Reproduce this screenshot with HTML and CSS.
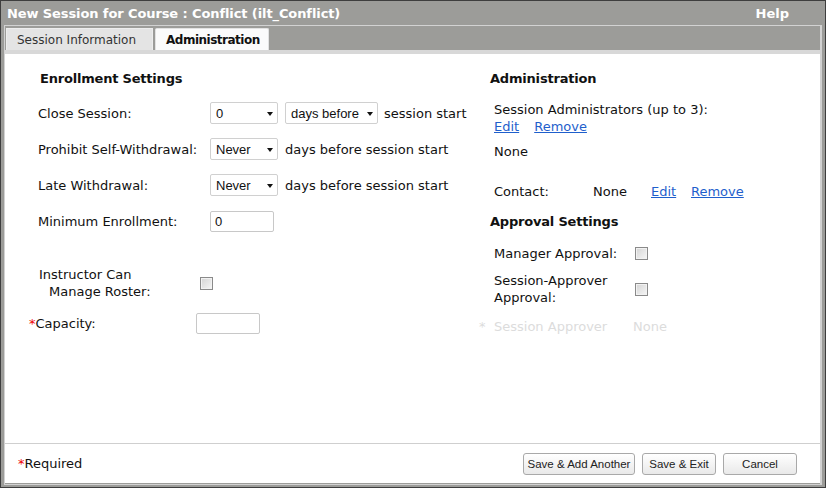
FILE: index.html
```html
<!DOCTYPE html>
<html>
<head>
<meta charset="utf-8">
<link rel="stylesheet" href="styles.css">
</head>
<body>
<div class="window">
  <div class="titlebar">
    <span class="title">New Session for Course : Conflict (ilt_Conflict)</span>
    <span class="help">Help</span>
  </div>
  <div class="panel">
    <div class="tabs">
      <div class="tab">Session Information</div>
      <div class="tab active">Administration</div>
    </div>
    <div class="band"></div>
    <div class="content">
      <div class="col-left">
        <h2 class="heading">Enrollment Settings</h2>
        <div class="rows">
          <div class="row">
            <span class="label">Close Session:</span>
            <span class="select sel-small"><select><option>0</option></select></span>
            <span class="select sel-days"><select><option>days before</option></select></span>
            <span class="after">session start</span>
          </div>
          <div class="row">
            <span class="label">Prohibit Self-Withdrawal:</span>
            <span class="select sel-small"><select><option>Never</option></select></span>
            <span class="after">days before session start</span>
          </div>
          <div class="row">
            <span class="label">Late Withdrawal:</span>
            <span class="select sel-small"><select><option>Never</option></select></span>
            <span class="after">days before session start</span>
          </div>
          <div class="row">
            <span class="label">Minimum Enrollment:</span>
            <input class="text" type="text" value="0">
          </div>
          <div class="row row-roster">
            <span class="label label-roster"><span>Instructor Can</span><span class="indent">Manage Roster:</span></span>
            <input class="check" type="checkbox">
          </div>
          <div class="row row-capacity">
            <span class="label label-cap"><span class="req">*</span>Capacity:</span>
            <input class="text" type="text" value="">
          </div>
        </div>
      </div>
      <div class="col-right">
        <h2 class="heading">Administration</h2>
        <div class="admins">
          <div>Session Administrators (up to 3):</div>
          <div class="links"><a href="#">Edit</a><a href="#">Remove</a></div>
        </div>
        <div class="none">None</div>
        <div class="contact">
          <span class="c-label">Contact:</span>
          <span class="c-value">None</span>
          <a href="#" class="c-edit">Edit</a>
          <a href="#">Remove</a>
        </div>
        <h2 class="heading heading-approval">Approval Settings</h2>
        <div class="approval approval-mgr">
          <span class="a-label">Manager Approval:</span>
          <input class="check" type="checkbox">
        </div>
        <div class="approval approval-sess">
          <span class="a-label">Session-Approver<br>Approval:</span>
          <input class="check" type="checkbox">
        </div>
        <div class="approver">
          <span class="star">*</span>
          <span class="ap-label">Session Approver</span>
          <span>None</span>
        </div>
      </div>
    </div>
    <div class="footer">
      <span class="required"><span class="req">*</span>Required</span>
      <div class="buttons">
        <button class="btn btn-wide">Save &amp; Add Another</button>
        <button class="btn">Save &amp; Exit</button>
        <button class="btn">Cancel</button>
      </div>
    </div>
  </div>
</div>
</body>
</html>
```

FILE: styles.css
```css
* { box-sizing: border-box; }
html, body { margin: 0; padding: 0; }
body {
  font-family: "DejaVu Sans", Verdana, sans-serif;
  font-size: 13px;
  color: #111;
  background: #fff;
}
.window {
  width: 826px;
  height: 488px;
  border: 1px solid #3e3e3e;
  background: #9c9c99;
  display: flex;
  flex-direction: column;
}
.titlebar {
  height: 24px;
  display: flex;
  align-items: center;
  justify-content: space-between;
  padding: 0 36px 0 6px;
  color: #fff;
  font-weight: bold;
  font-size: 13px;
}
.title { letter-spacing: -0.1px; }
.panel {
  margin: 0 3px;
  height: 460px;
  border: 1px solid #d2d2d2;
  border-right-width: 2px;
  display: flex;
  flex-direction: column;
}
.tabs {
  height: 24px;
  padding: 2px 0 0 1px;
  display: flex;
  gap: 2px;
}
.tab {
  height: 22px;
  padding: 0 0 0 10px;
  display: flex;
  align-items: center;
  white-space: nowrap;
  background: #e4e4e4;
  border: 1px solid #ededed;
  border-bottom: none;
  color: #333;
  font-size: 12px;
  width: 147px;
}
.tab.active {
  width: 114px;
  background: #fbfbfb;
  border-color: #e2e2e2;
  border-radius: 2px 2px 0 0;
  font-weight: bold;
  color: #111;
  letter-spacing: -0.5px;
}
.band { height: 4px; background: #d8d8d8; }
.content {
  height: 390px;
  background: #fff;
  padding: 17px 0 0 33px;
  display: flex;
  border-bottom: 1px solid #cfcfcf;
}
.heading {
  margin: 0;
  font-size: 13px;
  line-height: 16px;
  font-weight: bold;
  color: #111;
  letter-spacing: -0.2px;
}
.col-left { width: 452px; }
.col-left .heading { padding-left: 2px; }
.rows { margin-top: 15px; }
.row {
  display: flex;
  align-items: center;
  height: 22px;
  margin-bottom: 14px;
}
.label { width: 172px; flex: none; }
.select {
  position: relative;
  display: inline-block;
  height: 22px;
  flex: none;
}
.select select {
  appearance: none;
  -webkit-appearance: none;
  width: 100%;
  height: 22px;
  border: 1px solid #d0d0d0;
  border-radius: 2px;
  background: #fff;
  font-family: "Liberation Sans", Arial, sans-serif;
  font-size: 13px;
  color: #111;
  padding: 0 0 0 5px;
  margin: 0;
}
.select::after {
  content: "";
  position: absolute;
  right: 5px;
  top: 10px;
  border-left: 3.5px solid transparent;
  border-right: 3.5px solid transparent;
  border-top: 4px solid #111;
}
.sel-small { width: 68px; }
.sel-days { width: 93px; margin-left: 7px; }
.after { margin-left: 6px; }
.sel-small + .after { margin-left: 7px; }
.text {
  width: 64px;
  height: 21px;
  border: 1px solid #c8c8c8;
  border-radius: 2px;
  font-family: "Liberation Sans", Arial, sans-serif;
  font-size: 13px;
  padding: 0 0 0 4px;
  margin: 0;
  color: #111;
}
.check {
  appearance: none;
  -webkit-appearance: none;
  width: 13px;
  height: 13px;
  margin: 0;
  border: 1px solid #8a8a8a;
  background: linear-gradient(135deg, #d4d4d4, #f6f6f6);
  box-shadow: inset 0 0 0 1px #f2f2f2;
  flex: none;
}
.row-roster {
  margin-top: 34px;
  height: 34px;
  margin-bottom: 13px;
}
.label-roster {
  width: 162px;
  display: flex;
  flex-direction: column;
  line-height: 17px;
  padding-left: 1px;
}
.indent { padding-left: 10px; }
.row-capacity { height: 21px; }
.label-cap { width: 167px; margin-left: -9px; }
.req { color: #e00; }
.col-right { flex: 1; }
.admins {
  margin-top: 14px;
  padding-left: 4px;
  line-height: 17px;
}
.links a { margin-right: 15px; }
a { color: #1f5fcc; text-decoration: underline; }
.none { margin-top: 8px; padding-left: 4px; line-height: 17px; }
.contact {
  margin-top: 23px;
  padding-left: 4px;
  line-height: 17px;
  display: flex;
}
.c-label { width: 99px; }
.c-value { width: 58px; }
.c-edit { width: 40px; }
.heading-approval { margin-top: 14px; }
.approval {
  display: flex;
  align-items: center;
  padding-left: 4px;
  line-height: 17px;
}
.a-label { width: 141px; }
.approval-mgr { margin-top: 15px; }
.approval-sess { margin-top: 10px; }
.approver {
  margin-top: 12px;
  margin-left: -11px;
  display: flex;
  color: #dcdcdc;
  line-height: 17px;
}
.star { width: 15px; }
.ap-label { width: 139px; }
.footer {
  height: 39px;
  background: #fff;
  display: flex;
  align-items: center;
  justify-content: space-between;
  padding: 0 23px 0 13px;
}
.buttons { display: flex; gap: 7px; }
.btn {
  height: 22px;
  width: 74px;
  border: 1px solid #a9a9a9;
  border-radius: 3px;
  background: linear-gradient(#ffffff, #e9e9e9);
  font-family: "Liberation Sans", Arial, sans-serif;
  font-size: 11.5px;
  color: #222;
  padding: 0;
}
.btn-wide { width: 112px; }
```
